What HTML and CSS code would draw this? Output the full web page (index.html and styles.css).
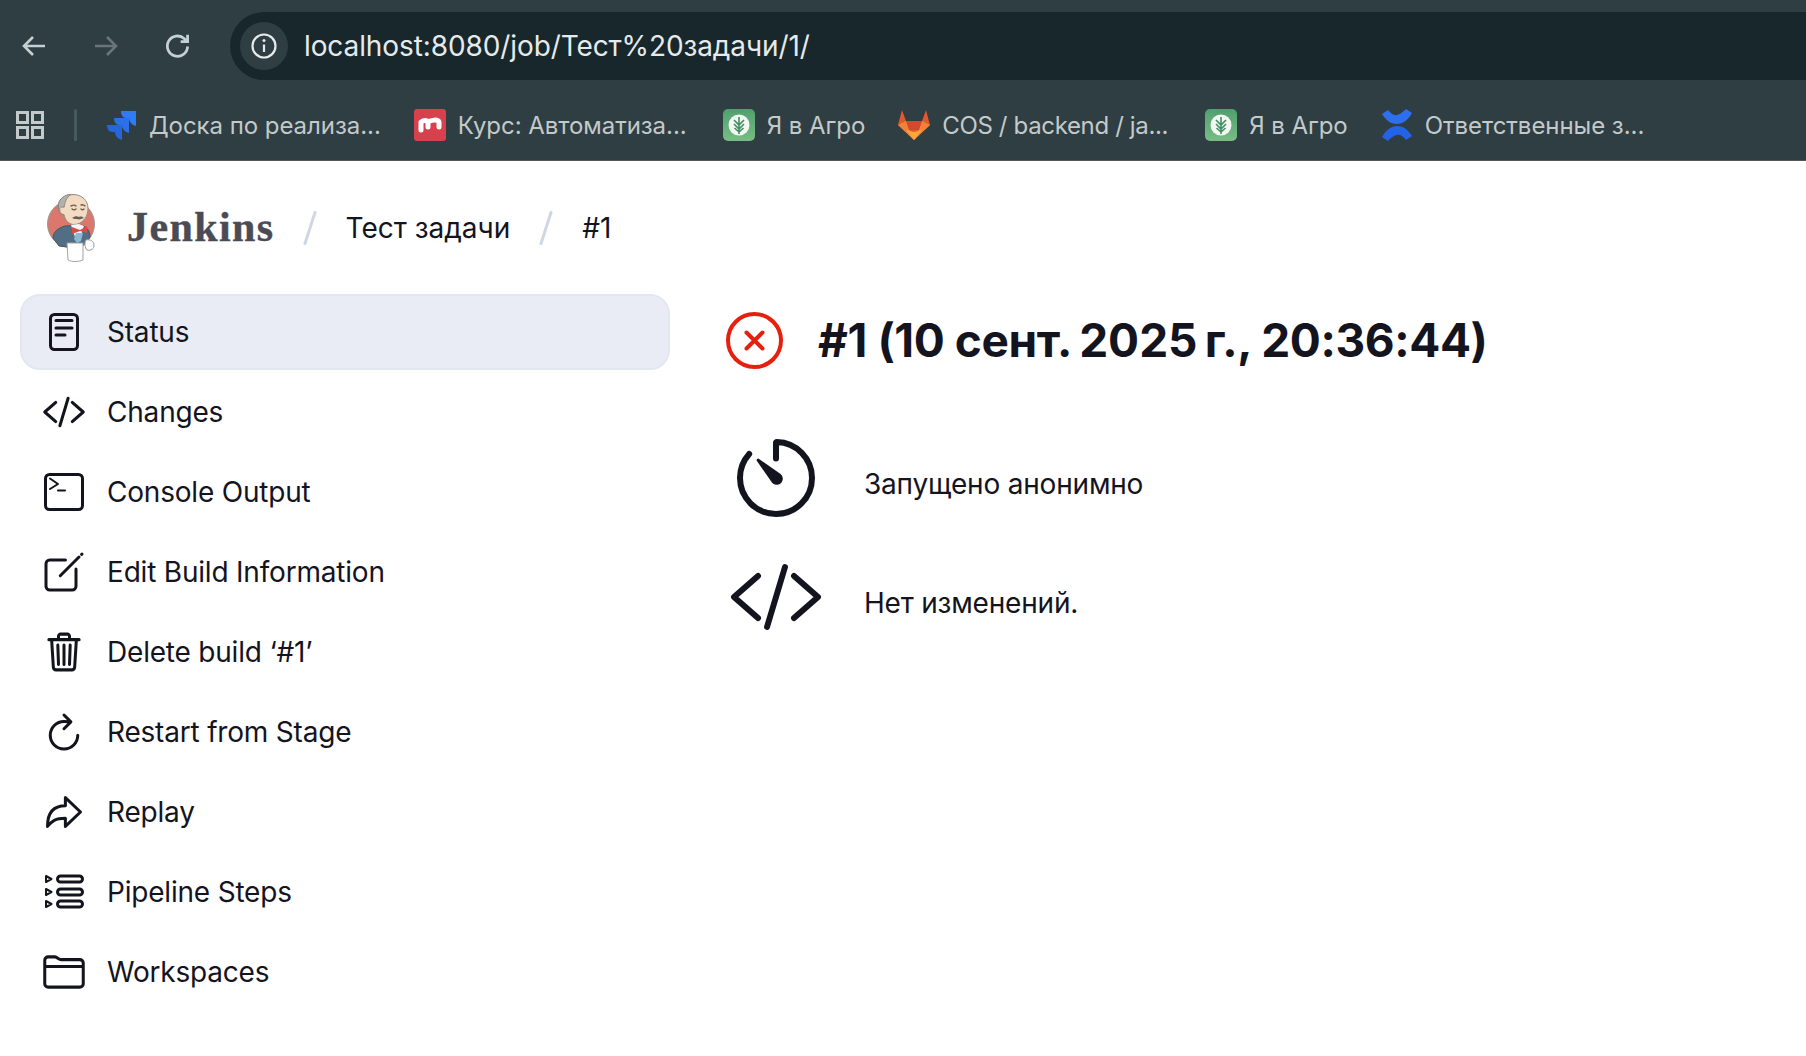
FILE: index.html
```html
<!DOCTYPE html>
<html lang="en">
<head>
    <meta charset="UTF-8">
    <title>Тест задачи #1 - Jenkins</title>
    <link rel="stylesheet" href="styles.css">
</head>
<body>
    <div class="browser">
        <div class="nav-row">
            <div class="nav-buttons">
                <svg class="nav-icon" viewBox="0 0 32 32"><path d="M27 16H6M15 7l-9 9 9 9"/></svg>
                <svg class="nav-icon dim" viewBox="0 0 32 32"><path d="M5 16h21M17 7l9 9-9 9"/></svg>
                <svg class="nav-icon" viewBox="1 1 30 30"><path d="M25 16.500A9.500 9.500 0 1 1 22 9.200L25 12M25 5.500V12h-6.500"/></svg>
            </div>
            <div class="omnibox">
                <span class="site-info">
                    <svg viewBox="0 0 28 28"><circle cx="14" cy="14" r="11.500"/><path d="M14 12.500V20"/><circle class="dot" cx="14" cy="8.500" r="1.500"/></svg>
                </span>
                <span class="url">localhost:8080/job/Тест%20задачи/1/</span>
            </div>
        </div>
        <div class="bookmarks">
            <svg class="apps" viewBox="0 0 28 28"><path d="M1.500 1.500h10v10h-10zM16.500 1.500h10v10h-10zM1.500 16.500h10v10h-10zM16.500 16.500h10v10h-10z"/></svg>
            <span class="bm-divider"></span>
            <a class="bookmark bm-first">
                <svg class="fav jira" viewBox="0 0 29 32">
                    <path fill="#2f7cf0" d="M14 2h15v15c-4-1-7-4-7-8h-3c-3 0-5-3-5-7z"/>
                    <path fill="#2b70e8" transform="translate(-7 7)" d="M14 2h15v15c-4-1-7-4-7-8h-3c-3 0-5-3-5-7z"/>
                    <path fill="#2566dc" transform="translate(-14 14)" d="M14 2h15v15c-4-1-7-4-7-8h-3c-3 0-5-3-5-7z"/>
                </svg>
                Доска по реализа...
            </a>
            <a class="bookmark bm-wide">
                <svg class="fav" viewBox="0 0 32 32">
                    <rect width="32" height="32" rx="3" fill="#d7404d"/>
                    <path fill="none" stroke="#fff" stroke-width="5" stroke-linecap="round" stroke-linejoin="round" d="M7 21v-8c3-2 6-2 7 0v5-5c3-2 10-3 11 0v5"/>
                </svg>
                Курс: Автоматиза...
            </a>
            <a class="bookmark">
                <svg class="fav" viewBox="0 0 32 32">
                    <use href="#agro"/>
                </svg>
                Я в Агро
            </a>
            <a class="bookmark bm-tight">
                <svg class="fav" viewBox="0 0 32 32">
                    <path fill="#e2592a" d="M4 1l4 11h16l4-11 4 15-16 15L0 16z"/>
                    <path fill="#f0833a" d="M0 16l8-4 8 19zM32 16l-8-4-8 19z"/>
                    <path fill="#f9a63b" d="M8 21l8 10 8-10-8 2z"/>
                    <path fill="#d24a2e" d="M8 12h16l-3 9H11z"/>
                </svg>
                COS / backend / ja...
            </a>
            <a class="bookmark">
                <svg class="fav" viewBox="0 0 32 32">
                    <use href="#agro"/>
                </svg>
                Я в Агро
            </a>
            <a class="bookmark">
                <svg class="fav" viewBox="0 0 32 32">
                    <path fill="#2e6ff0" d="M1 5l6-4c5 6 9 8 18-1l6 4c-4 7-9 11-15 11C9 15 5 11 1 5z"/>
                    <path fill="#2463e8" d="M31 27l-6 4c-5-6-9-8-18 1l-6-4c4-7 9-11 15-11 7 0 11 4 15 10z"/>
                </svg>
                Ответственные з...
            </a>
        </div>
    </div>

    <svg class="defs" width="0" height="0">
        <symbol id="agro" viewBox="0 0 32 32">
            <defs>
                <linearGradient id="agroBg" x1="0" y1="0" x2="0" y2="1">
                    <stop offset="0" stop-color="#4fa06f"/>
                    <stop offset="1" stop-color="#78bd84"/>
                </linearGradient>
            </defs>
            <rect width="32" height="32" rx="5" fill="url(#agroBg)"/>
            <circle cx="16" cy="16" r="10.500" fill="#f3f6f1"/>
            <path fill="none" stroke="#3f8f63" stroke-width="1.600" d="M16 8v17M11 11l5 5 5-5M11 15l5 5 5-5M11.500 19l4.500 4 4.500-4"/>
        </symbol>
    </svg>

    <header class="crumbs">
        <svg class="logo" viewBox="0 0 48 68">
            <circle cx="24" cy="30" r="23.500" fill="#d9695f" stroke="#8f8f8f"/>
            <path fill="#3f5f78" stroke="#39434d" d="M6 44c0-6 5-10 12-12l16-1c6 2 9 6 9 12l-5 7-4 3H20l-8-1z"/>
            <path fill="#a9a9a9" stroke="#77736e" d="M12 8C14 3 20 0 26 0l-8 12-2 9-3-2c-2-4-2-8-1-11z"/>
            <path fill="#f1d8bb" stroke="#8a7f75" d="M26 .5c9 0 15 6 15 14 0 9-6 16-14 16-5 0-9-4-10-10-3 0-5-3-4-6 1-2 3-2 4-1 1-7 4-13 9-13z"/>
            <path fill="none" stroke="#5b4d45" stroke-width="1.400" stroke-linecap="round" d="M24 12c2-1 4-1 5 0M34 11c2-1 3 0 4 1M25 15c1 1 3 1 4 0M34 15c1 1 2 1 3 0"/>
            <path fill="#5b4d45" d="M25 24c3-2 5-2 7-1 2-1 4 0 5 1-3 1-5 2-7 1-2 0-3 0-5-1z"/>
            <path fill="#f4f6f8" d="M24 31l8-1 5 2-4 12-4 2z"/>
            <path fill="#7fb2cf" d="M29 39h7l-2 8-4 2-3-4z"/>
            <path fill="#d23b32" d="M25 33l8 3 7-4v7l-7-2-8 3z"/>
            <path fill="#fff" stroke="#9a9a9a" d="M20 49h16v17c-5 2-11 2-15 0z"/>
            <path fill="#fff" stroke="#8f8f8f" d="M39 46c4-1 8 1 8 5s-3 6-7 5c-2-2-3-7-1-10z"/>
        </svg>
        <span class="brand">Jenkins</span>
        <svg class="slash" viewBox="0 0 14 34"><path d="M12 1.500L2 32.500"/></svg>
        <span class="crumb">Тест задачи</span>
        <svg class="slash" viewBox="0 0 14 34"><path d="M12 1.500L2 32.500"/></svg>
        <span class="crumb">#1</span>
    </header>

    <div class="layout">
        <nav class="sidebar">
            <a class="task active">
                <svg class="task-icon" viewBox="0 0 48 48"><rect x="10.500" y="6.500" width="27" height="35" rx="4"/><path d="M16 12.500h16M16 20h16M16 27h9"/></svg>
                Status
            </a>
            <a class="task">
                <svg class="task-icon small" viewBox="0 0 512 512"><path class="ion" d="M160 368L32 256l128-112M352 368l128-112-128-112M304 96l-96 320"/></svg>
                Changes
            </a>
            <a class="task">
                <svg class="task-icon" viewBox="0 0 48 48"><rect x="5.500" y="6.500" width="37" height="35" rx="4"/><path class="thin" d="M10 10.500l8 5.500-8 5M18 22.500h7"/></svg>
                Console Output
            </a>
            <a class="task">
                <svg class="task-icon" viewBox="0 0 512 512"><path class="ion" d="M384 224v184a40 40 0 01-40 40H104a40 40 0 01-40-40V168a40 40 0 0140-40h167.480M216 296L416 96M444 68l4-4"/></svg>
                Edit Build Information
            </a>
            <a class="task">
                <svg class="task-icon small" viewBox="0 0 512 512"><path class="ion" d="M112 112l20 320c.95 18.490 14.400 32 32 32h184c17.670 0 30.870-13.510 32-32l20-320M80 112h352M192 112V72a23.930 23.930 0 0124-24h80a23.930 23.930 0 0124 24v40M256 176v224M184 176l8 224M328 176l-8 224"/></svg>
                Delete build ‘#1’
            </a>
            <a class="task">
                <svg class="task-icon small" viewBox="0 0 512 512"><path class="ion" d="M320 146s24.360-12-64-12a160 160 0 10160 160M256 58l80 80-80 80"/></svg>
                Restart from Stage
            </a>
            <a class="task">
                <svg class="task-icon small" viewBox="0 0 512 512"><path class="ion" d="M448 256L272 88v96C103.570 184 64 304.770 64 424c48.610-62.240 91.600-96 208-96v96z"/></svg>
                Replay
            </a>
            <a class="task">
                <svg class="task-icon" viewBox="0 0 48 48"><path class="thin" d="M6 8l5.500 3-5.500 3zM6 21l5.500 3-5.500 3zM6 33l5.500 3-5.500 3z"/><rect x="17.500" y="8" width="25" height="6" rx="3"/><rect x="17.500" y="21" width="25" height="6" rx="3"/><rect x="17.500" y="33" width="25" height="6" rx="3"/></svg>
                Pipeline Steps
            </a>
            <a class="task">
                <svg class="task-icon small" viewBox="0 0 512 512"><path class="ion" d="M440 432H72a40 40 0 01-40-40V120a40 40 0 0140-40h75.890a40 40 0 0122.190 6.720l27.840 18.560a40 40 0 0022.190 6.720H440a40 40 0 0140 40v240a40 40 0 01-40 40zM32 192h448"/></svg>
                Workspaces
            </a>
        </nav>

        <main class="build">
            <div class="build-title">
                <svg class="status-icon" viewBox="0 0 57 57"><circle cx="28.500" cy="28.500" r="26.500"/><path d="M20.500 20.500l16 16M36.500 20.500l-16 16"/></svg>
                <h1>#1 (10 сент.&#8239;2025&#8239;г., 20:36:44)</h1>
            </div>
            <div class="build-row">
                <svg class="row-icon" viewBox="0 0 512 512">
                    <path class="ion" d="M112.910 128A191.850 191.850 0 0064 254c-1.180 106.350 85.650 193.800 192 194 106.200.2 192-85.830 192-192 0-104.540-83.550-189.610-187.500-192a4.360 4.360 0 00-4.500 4.370V152"/>
                    <path class="ion-fill" d="M233.380 278.630l-79-113a8.130 8.130 0 0111.320-11.320l113 79a32.500 32.500 0 01-37.250 53.260 33.210 33.210 0 01-8.070-7.940z"/>
                </svg>
                <span class="row-text">Запущено анонимно</span>
            </div>
            <div class="build-row">
                <svg class="row-icon" viewBox="0 0 512 512"><path class="ion" d="M160 368L32 256l128-112M352 368l128-112-128-112M304 96l-96 320"/></svg>
                <span class="row-text">Нет изменений.</span>
            </div>
        </main>
    </div>
</body>
</html>
```

FILE: styles.css
```css
body {
    margin: 0;
    background: #fff;
    color: #14141f;
    font-family: Inter, "Liberation Sans", sans-serif;
    overflow: hidden;
}

/* browser chrome */
.browser {
    height: 148px;
    padding-top: 12px;
    background: #2e3e43;
    border-bottom: 1px solid #55585a;
}
.nav-row {
    display: flex;
    height: 68px;
}
.nav-buttons {
    display: flex;
    align-items: center;
    gap: 40px;
    width: 230px;
    padding-left: 18px;
    box-sizing: border-box;
}
.nav-icon {
    width: 32px;
    height: 32px;
    flex: none;
    fill: none;
    stroke: #c5d0d2;
    stroke-width: 2.600;
}
.nav-icon.dim {
    stroke: #697679;
}
.omnibox {
    flex: 1;
    display: flex;
    align-items: center;
    background: #17272c;
    border-radius: 34px 0 0 34px;
    padding-left: 10px;
}
.site-info {
    display: flex;
    align-items: center;
    justify-content: center;
    width: 48px;
    height: 48px;
    border-radius: 50%;
    background: #2e3e43;
}
.site-info svg {
    width: 28px;
    height: 28px;
    fill: none;
    stroke: #e6eaea;
    stroke-width: 2.200;
}
.site-info .dot {
    fill: #e6eaea;
    stroke: none;
}
.url {
    margin-left: 16px;
    font-size: 28px;
    letter-spacing: -0.1px;
    color: #e6eaea;
}
.bookmarks {
    display: flex;
    align-items: center;
    height: 80px;
    padding: 10px 0 0 16px;
    box-sizing: border-box;
    color: #c4c9c9;
    font-size: 24px;
    letter-spacing: -0.05px;
}
.apps {
    width: 28px;
    height: 28px;
    flex: none;
    fill: none;
    stroke: #c4c9c9;
    stroke-width: 3;
}
.bm-divider {
    width: 3px;
    height: 32px;
    margin-left: 30px;
    border-radius: 2px;
    background: #475a60;
}
.bookmark {
    display: flex;
    align-items: center;
    gap: 12px;
    margin-left: 33px;
    white-space: nowrap;
}
.bm-first {
    margin-left: 30px;
    gap: 13px;
}
.bm-wide {
    margin-right: 3px;
}
.bm-tight {
    letter-spacing: -0.35px;
    margin-right: 4px;
}
.fav {
    width: 32px;
    height: 32px;
    flex: none;
}
.fav.jira {
    width: 29px;
}
.defs {
    position: absolute;
}

/* jenkins header */
.crumbs {
    display: flex;
    align-items: center;
    height: 133px;
    padding-left: 47px;
    font-size: 28px;
}
.logo {
    width: 48px;
    height: 68px;
    flex: none;
    opacity: 0.9;
}
.brand {
    margin: -2px -1px 0 32px;
    font-family: "Liberation Serif", serif;
    font-weight: bold;
    font-size: 42px;
    letter-spacing: 1.400px;
    color: #4b4b55;
    -webkit-text-stroke: 0.4px #4b4b55;
}
.slash {
    width: 14px;
    height: 34px;
    margin: 0 29px;
    flex: none;
    fill: none;
    stroke: #cfd6e4;
    stroke-width: 3;
    stroke-linecap: round;
}
.layout {
    display: flex;
    gap: 56px;
    padding-left: 20px;
}

/* side panel */
.sidebar {
    display: flex;
    flex-direction: column;
    gap: 4px;
    width: 650px;
    flex: none;
}
.task {
    display: flex;
    align-items: center;
    gap: 19px;
    height: 76px;
    padding-left: 20px;
    box-sizing: border-box;
    border-radius: 20px;
    font-size: 28px;
    letter-spacing: -0.2px;
}
.task.active {
    background: #e9ecf4;
    border: 2px solid #e3e7f1;
    padding-left: 18px;
}
.task-icon {
    width: 48px;
    height: 48px;
    flex: none;
    fill: none;
    stroke: #14141f;
    stroke-width: 3;
    stroke-linecap: round;
    stroke-linejoin: round;
}
.task-icon.small {
    width: 44px;
    height: 44px;
    margin: 0 2px;
}
.task-icon .thin {
    stroke-width: 2;
}
.ion {
    fill: none;
    stroke: #14141f;
    stroke-width: 32px;
    stroke-linecap: round;
    stroke-linejoin: round;
}
.task-icon.small .ion {
    stroke-width: 35px;
}
.ion-fill {
    fill: #14141f;
    stroke: none;
}

/* build summary */
.build-title {
    display: flex;
    align-items: center;
    gap: 35px;
    height: 92px;
}
.status-icon {
    width: 57px;
    height: 57px;
    flex: none;
    fill: none;
    stroke: #e6200f;
    stroke-width: 4;
    stroke-linecap: round;
}
.build-title h1 {
    margin: 0;
    font-size: 46px;
    font-weight: 700;
    letter-spacing: -0.4px;
    white-space: nowrap;
}
.build-row {
    display: flex;
    align-items: center;
    gap: 38px;
    height: 100px;
    margin-top: 19px;
}
.build-title + .build-row {
    margin-top: 42px;
}
.row-icon {
    width: 96px;
    height: 96px;
    margin: 0 2px;
    flex: none;
}
.row-text {
    padding-top: 12px;
    font-size: 28px;
    letter-spacing: -0.2px;
}
```
